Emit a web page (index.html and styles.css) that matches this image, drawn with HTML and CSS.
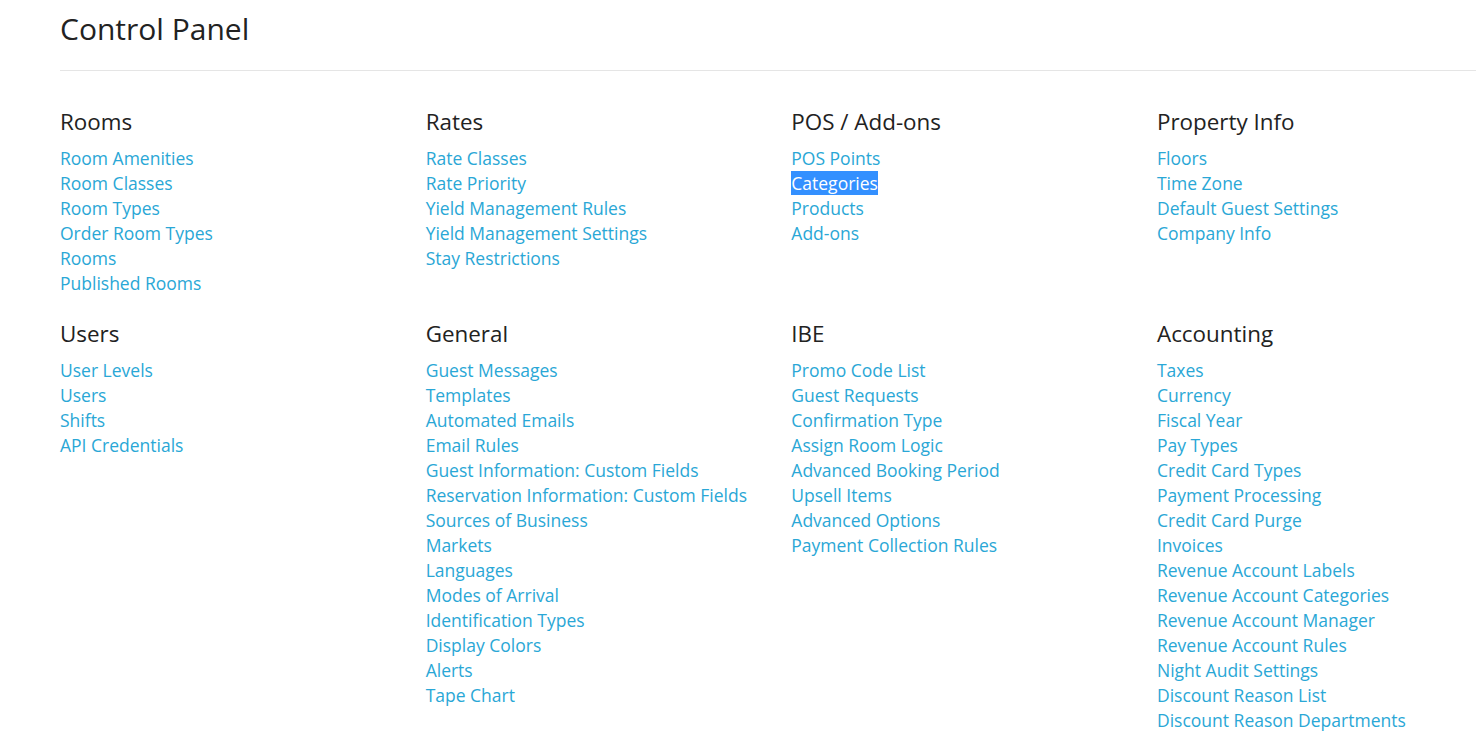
FILE: index.html
```html
<!DOCTYPE html>
<html>
<head>
<meta charset="utf-8">
<title>Control Panel</title>
<link rel="stylesheet" href="styles.css">
</head>
<body>
<div class="page">
  <h1 class="title">Control Panel</h1>
  <div class="grid">
    <section class="group">
      <h2>Rooms</h2>
      <a href="#">Room Amenities</a>
      <a href="#">Room Classes</a>
      <a href="#">Room Types</a>
      <a href="#">Order Room Types</a>
      <a href="#">Rooms</a>
      <a href="#">Published Rooms</a>
    </section>
    <section class="group">
      <h2>Rates</h2>
      <a href="#">Rate Classes</a>
      <a href="#">Rate Priority</a>
      <a href="#">Yield Management Rules</a>
      <a href="#">Yield Management Settings</a>
      <a href="#">Stay Restrictions</a>
    </section>
    <section class="group">
      <h2>POS / Add-ons</h2>
      <a href="#">POS Points</a>
      <a href="#"><span class="selected">Categories</span></a>
      <a href="#">Products</a>
      <a href="#">Add-ons</a>
    </section>
    <section class="group">
      <h2>Property Info</h2>
      <a href="#">Floors</a>
      <a href="#">Time Zone</a>
      <a href="#">Default Guest Settings</a>
      <a href="#">Company Info</a>
    </section>
    <section class="group">
      <h2>Users</h2>
      <a href="#">User Levels</a>
      <a href="#">Users</a>
      <a href="#">Shifts</a>
      <a href="#">API Credentials</a>
    </section>
    <section class="group">
      <h2>General</h2>
      <a href="#">Guest Messages</a>
      <a href="#">Templates</a>
      <a href="#">Automated Emails</a>
      <a href="#">Email Rules</a>
      <a href="#">Guest Information: Custom Fields</a>
      <a href="#">Reservation Information: Custom Fields</a>
      <a href="#">Sources of Business</a>
      <a href="#">Markets</a>
      <a href="#">Languages</a>
      <a href="#">Modes of Arrival</a>
      <a href="#">Identification Types</a>
      <a href="#">Display Colors</a>
      <a href="#">Alerts</a>
      <a href="#">Tape Chart</a>
    </section>
    <section class="group">
      <h2>IBE</h2>
      <a href="#">Promo Code List</a>
      <a href="#">Guest Requests</a>
      <a href="#">Confirmation Type</a>
      <a href="#">Assign Room Logic</a>
      <a href="#">Advanced Booking Period</a>
      <a href="#">Upsell Items</a>
      <a href="#">Advanced Options</a>
      <a href="#">Payment Collection Rules</a>
    </section>
    <section class="group">
      <h2>Accounting</h2>
      <a href="#">Taxes</a>
      <a href="#">Currency</a>
      <a href="#">Fiscal Year</a>
      <a href="#">Pay Types</a>
      <a href="#">Credit Card Types</a>
      <a href="#">Payment Processing</a>
      <a href="#">Credit Card Purge</a>
      <a href="#">Invoices</a>
      <a href="#">Revenue Account Labels</a>
      <a href="#">Revenue Account Categories</a>
      <a href="#">Revenue Account Manager</a>
      <a href="#">Revenue Account Rules</a>
      <a href="#">Night Audit Settings</a>
      <a href="#">Discount Reason List</a>
      <a href="#">Discount Reason Departments</a>
    </section>
  </div>
</div>
</body>
</html>
```

FILE: styles.css
```css
html, body {
  margin: 0;
  padding: 0;
  background: #ffffff;
}
body {
  font-family: "Open Sans", "Liberation Sans", sans-serif;
  color: #222222;
}
.page {
  padding-left: 60px;
}
.title {
  margin: 0;
  padding-top: 9px;
  height: 71px;
  box-sizing: border-box;
  font-size: 30px;
  font-weight: 400;
  line-height: 40px;
  color: #222222;
  border-bottom: 1px solid #e5e5e5;
}
.grid {
  display: grid;
  grid-template-columns: repeat(4, 365.67px);
  padding-top: 36px;
}
.group {
  display: flex;
  flex-direction: column;
  align-items: flex-start;
  padding-bottom: 23px;
}
.group h2 {
  margin: 0 0 9px 0;
  font-size: 22.4px;
  font-weight: 400;
  line-height: 30px;
  color: #222222;
}
.group a {
  font-size: 17.5px;
  line-height: 25px;
  color: #2aa7d6;
  text-decoration: none;
}
.selected {
  background: #3390ff;
  color: #ffffff;
}
```
